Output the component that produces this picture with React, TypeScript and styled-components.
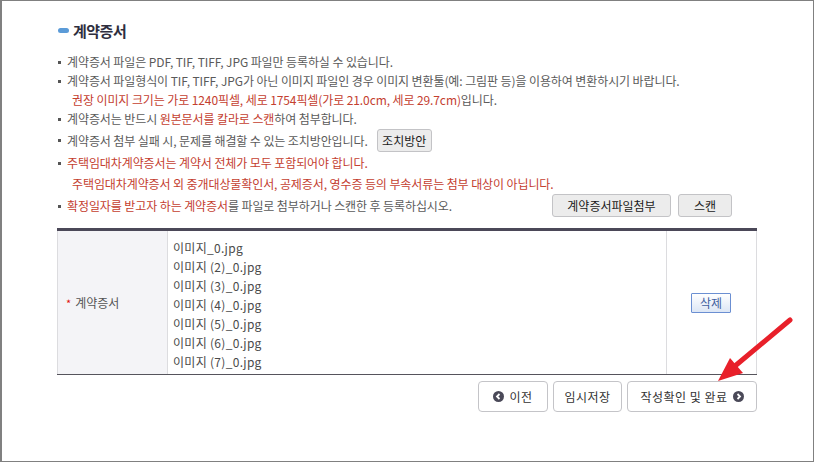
import styled, { createGlobalStyle } from 'styled-components';

const GlobalStyle = createGlobalStyle`
  html, body {
    margin: 0;
    padding: 0;
    background: #ffffff;
  }
  body {
    font-family: 'Noto Sans CJK KR', 'Noto Sans', sans-serif;
    font-size: 12px;
    color: #555555;
  }
  * {
    box-sizing: border-box;
  }
`;

// Frame
const Frame = styled.div`
  position: relative;
  width: 814px;
  height: 462px;
  border: 1px solid #808080;
  border-left-width: 2px;
  background: #ffffff;
  padding: 20px 0 0 55px;
  overflow: hidden;
`;

const Content = styled.div`
  width: 700px;
`;

const Title = styled.h2`
  display: flex;
  align-items: center;
  margin: 0;
  height: 18px;
  font-size: 15px;
  font-weight: 700;
  letter-spacing: -0.5px;
  color: #2e2e3e;

  &::before {
    content: '';
    display: block;
    width: 11px;
    height: 5px;
    margin: 1px 4px 0 1px;
    border-radius: 3px;
    background: #5b9bd8;
  }
`;

// Notice list
const NoticeList = styled.ul`
  list-style: none;
  margin: 13px 0 0;
  padding: 0;
`;

const NoticeItem = styled.li<{ $h: number; $sub?: boolean; $red?: boolean }>`
  display: flex;
  align-items: center;
  height: ${(p) => p.$h}px;
  padding-left: ${(p) => (p.$sub ? 15 : 10)}px;
  position: relative;
  letter-spacing: -0.1px;
  color: ${(p) => (p.$red ? '#c4402f' : '#5a5a5a')};
  white-space: nowrap;

  &::before {
    content: ${(p) => (p.$sub ? 'none' : "''")};
    position: absolute;
    left: 1px;
    top: 50%;
    margin-top: -1px;
    width: 3px;
    height: 3px;
    background: #555555;
  }
`;

const Red = styled.span`
  color: #c4402f;
`;

const GrayButton = styled.button<{ $w: number }>`
  width: ${(p) => p.$w}px;
  height: 23px;
  padding: 0;
  border: 1px solid #c3c3c6;
  border-radius: 3px;
  background: #ececec;
  font-family: 'Noto Sans CJK KR', sans-serif;
  font-size: 12px;
  color: #1a1a1a;
  cursor: pointer;
`;

const InlineButton = styled(GrayButton)`
  margin-left: 9px;
`;

const AttachGroup = styled.div`
  display: flex;
  gap: 7px;
  margin-left: auto;
  margin-right: 25px;
`;

// File table
const FileTable = styled.div`
  display: grid;
  grid-template-columns: 111px 499px 90px;
  margin-top: 11px;
  border-top: 3px solid #4b4858;
  border-bottom: 1px solid #56545c;
`;

const LabelCell = styled.div`
  display: flex;
  align-items: center;
  padding-left: 8px;
  background: #f4f4f7;
  border-left: 1px solid #dcdcdf;
  border-right: 1px solid #dcdcdf;
  color: #555555;
`;

const Required = styled.span`
  color: #e01010;
  margin-right: 4px;
  font-size: 11px;
`;

const FileCell = styled.div`
  padding: 7px 0 3px 5px;
  border-right: 1px solid #dcdcdf;
`;

const FileName = styled.div`
  height: 19px;
  line-height: 19px;
  color: #4a4a4a;
  letter-spacing: 0.3px;
`;

const ActionCell = styled.div`
  display: flex;
  align-items: center;
  justify-content: center;
  border-right: 1px solid #dcdcdf;
  padding-right: 1px;
`;

const DeleteButton = styled.button`
  width: 40px;
  height: 20px;
  padding: 0;
  border: 1px solid #6b8fd2;
  border-radius: 1px;
  background: linear-gradient(#ffffff, #dce6f5);
  font-family: 'Noto Sans CJK KR', sans-serif;
  font-size: 12px;
  color: #3f5f9f;
  cursor: pointer;
`;

// Bottom navigation
const NavRow = styled.div`
  display: flex;
  justify-content: flex-end;
  gap: 5px;
  margin-top: 6px;
`;

const NavButton = styled.button<{ $w: number }>`
  display: flex;
  align-items: center;
  justify-content: center;
  gap: 5px;
  width: ${(p) => p.$w}px;
  height: 31px;
  padding: 0;
  border: 1px solid #c4c4c8;
  border-radius: 4px;
  background: #ffffff;
  font-family: 'Noto Sans CJK KR', sans-serif;
  font-size: 12px;
  letter-spacing: 0.5px;
  color: #333333;
  cursor: pointer;
`;

const Arrow = styled.svg`
  position: absolute;
  left: 0;
  top: 0;
  pointer-events: none;
`;

const CircleIcon = ({ dir }: { dir: 'left' | 'right' }) => (
  <svg width="11" height="11" viewBox="0 0 11 11">
    <circle cx="5.5" cy="5.5" r="5.5" fill="#4a4958" />
    <path
      d={dir === 'left' ? 'M6.5 3 L4 5.5 L6.5 8' : 'M4.5 3 L7 5.5 L4.5 8'}
      fill="none"
      stroke="#ffffff"
      strokeWidth="1.8"
    />
  </svg>
);

const files = [
  '이미지_0.jpg',
  '이미지 (2)_0.jpg',
  '이미지 (3)_0.jpg',
  '이미지 (4)_0.jpg',
  '이미지 (5)_0.jpg',
  '이미지 (6)_0.jpg',
  '이미지 (7)_0.jpg',
];

export default function App() {
  return (
    <>
      <GlobalStyle />
      <Frame>
        <Content>
          <Title>계약증서</Title>
          <NoticeList>
            <NoticeItem $h={19}>
              계약증서 파일은 PDF, TIF, TIFF, JPG 파일만 등록하실 수 있습니다.
            </NoticeItem>
            <NoticeItem $h={19}>
              계약증서 파일형식이 TIF, TIFF, JPG가 아닌 이미지 파일인 경우 이미지 변환툴(예: 그림판 등)을 이용하여 변환하시기 바랍니다.
            </NoticeItem>
            <NoticeItem $h={19} $sub>
              <Red>권장 이미지 크기는 가로 1240픽셀, 세로 1754픽셀(가로 21.0cm, 세로 29.7cm)</Red>입니다.
            </NoticeItem>
            <NoticeItem $h={19}>
              계약증서는 반드시&nbsp;<Red>원본문서를 칼라로 스캔</Red>하여 첨부합니다.
            </NoticeItem>
            <NoticeItem $h={24}>
              계약증서 첨부 실패 시, 문제를 해결할 수 있는 조치방안입니다.
              <InlineButton $w={55}>조치방안</InlineButton>
            </NoticeItem>
            <NoticeItem $h={21} $red>
              주택임대차계약증서는 계약서 전체가 모두 포함되어야 합니다.
            </NoticeItem>
            <NoticeItem $h={21} $sub $red>
              주택임대차계약증서 외 중개대상물확인서, 공제증서, 영수증 등의 부속서류는 첨부 대상이 아닙니다.
            </NoticeItem>
            <NoticeItem $h={23}>
              <Red>확정일자를 받고자 하는 계약증서</Red>를 파일로 첨부하거나 스캔한 후 등록하십시오.
              <AttachGroup>
                <GrayButton $w={119}>계약증서파일첨부</GrayButton>
                <GrayButton $w={54}>스캔</GrayButton>
              </AttachGroup>
            </NoticeItem>
          </NoticeList>

          <FileTable>
            <LabelCell>
              <Required>*</Required>계약증서
            </LabelCell>
            <FileCell>
              {files.map((f) => (
                <FileName key={f}>{f}</FileName>
              ))}
            </FileCell>
            <ActionCell>
              <DeleteButton>삭제</DeleteButton>
            </ActionCell>
          </FileTable>

          <NavRow>
            <NavButton $w={70}>
              <CircleIcon dir="left" />
              이전
            </NavButton>
            <NavButton $w={69}>임시저장</NavButton>
            <NavButton $w={130}>
              작성확인 및 완료
              <CircleIcon dir="right" />
            </NavButton>
          </NavRow>
        </Content>

        <Arrow width="814" height="462" viewBox="0 0 814 462">
          <line x1="788" y1="319" x2="733" y2="365" stroke="#e8202a" strokeWidth="5" strokeLinecap="round" />
          <polygon points="716,380 741,372 728,357" fill="#e8202a" />
        </Arrow>
      </Frame>
    </>
  );
}
